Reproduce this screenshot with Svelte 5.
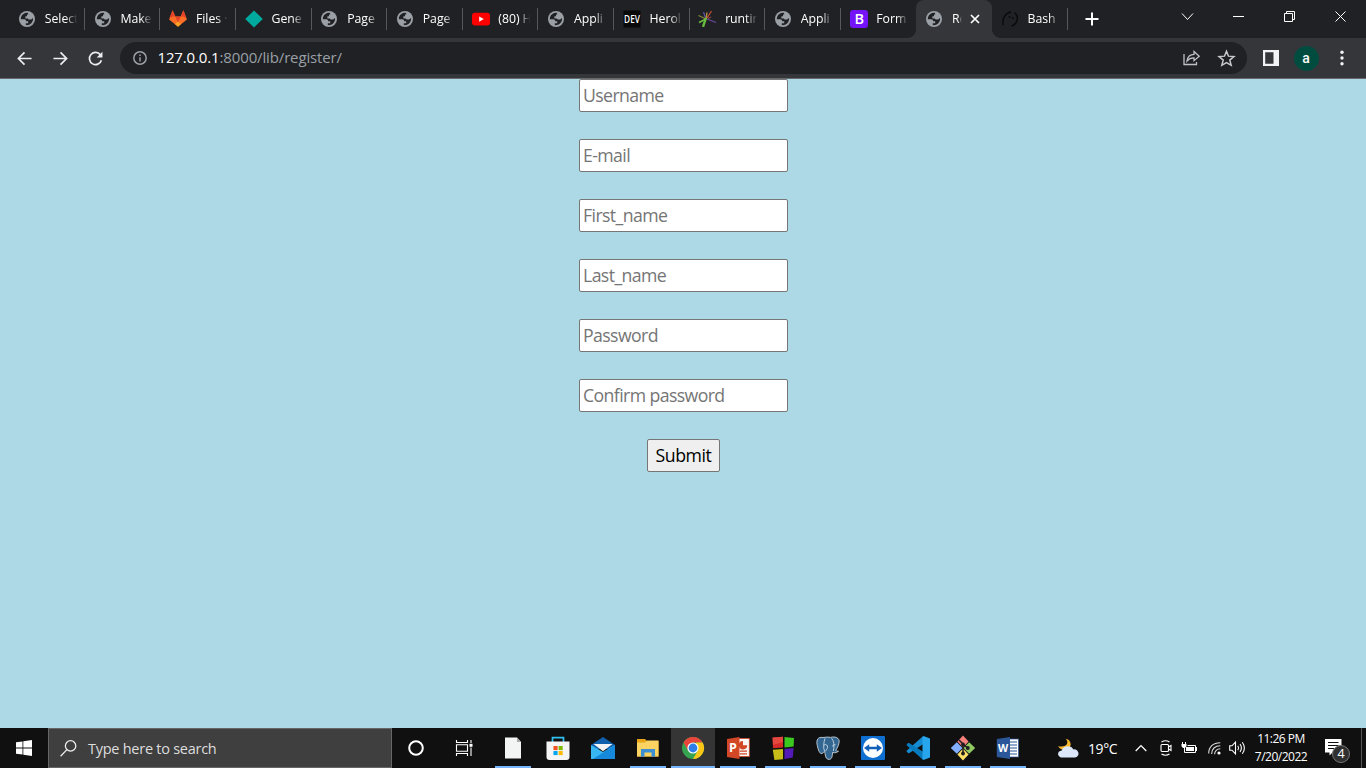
<script>
  const tabs = [
    { icon: 'globe', label: 'Select' },
    { icon: 'globe', label: 'Make' },
    { icon: 'gitlab', label: 'Files ·' },
    { icon: 'diamond', label: 'Gene' },
    { icon: 'globe', label: 'Page' },
    { icon: 'globe', label: 'Page' },
    { icon: 'youtube', label: '(80) H' },
    { icon: 'globe', label: 'Appli' },
    { icon: 'dev', label: 'Herol' },
    { icon: 'burst', label: 'runtin' },
    { icon: 'globe', label: 'Appli' },
    { icon: 'bootstrap', label: 'Form' },
    { icon: 'globe', label: 'Re', active: true },
    { icon: 'bash', label: 'Bash' }
  ];
  const fields = [
    { type: 'text', hint: 'Username' },
    { type: 'email', hint: 'E-mail' },
    { type: 'text', hint: 'First_name' },
    { type: 'text', hint: 'Last_name' },
    { type: 'password', hint: 'Password' },
    { type: 'password', hint: 'Confirm password' }
  ];
  const apps = [
    { id: 'file', open: true },
    { id: 'store' },
    { id: 'mail' },
    { id: 'explorer', open: true },
    { id: 'chrome', open: true, current: true },
    { id: 'ppt', open: true },
    { id: 'blocks', open: true },
    { id: 'pg', open: true },
    { id: 'tv', open: true },
    { id: 'code', open: true },
    { id: 'git', open: true },
    { id: 'word', open: true }
  ];
</script>

{#snippet favicon(name)}
  <svg class="fav" viewBox="0 0 16 16">
    {#if name === 'globe'}
      <circle cx="8" cy="8" r="8" fill="#9aa0a6" />
      <path d="M8.8 1.8C6 1.4 3 3 2 6.2L1.8 8.2H5.2C6.8 8.2 7.2 9.2 7.1 10.2H9.2V12.2H6.8V14C8 14.4 10.5 14 12 12.6C13.7 11 14.3 8.8 14 7L12.2 8.6H9.6L8.8 7.4H6.4V5.2H8V3.6H9.4Z" fill="#202124" />
    {:else if name === 'gitlab'}
      <path d="M2.6 -0.8L-0.9 8.5L8 15.8L16.9 8.5L13.4 -0.8L10.6 5.4H5.4Z" fill="#fc6d26" />
      <path d="M2.6 -0.8L-0.4 7L3 5.4H5.4ZM13.4 -0.8L16.4 7L13 5.4H10.6ZM5.4 5.4H10.6L8 12Z" fill="#e24329" />
      <path d="M5 13L8 10.4L11 13L8 15.8Z" fill="#fca326" />
    {:else if name === 'diamond'}
      <path d="M8 -0.6L16.8 8L8 16.6L-0.8 8Z" fill="#00a99d" />
    {:else if name === 'youtube'}
      <rect x="-1" y="1.7" width="18" height="12.8" rx="3" fill="#f00" />
      <path d="M6.2 5.4L10.8 8L6.2 10.8Z" fill="#fff" />
    {:else if name === 'dev'}
      <rect x="-.5" y="-.5" width="17" height="17" fill="#090909" />
      <text x="0.1" y="12.2" textLength="15.8" lengthAdjust="spacingAndGlyphs" font-size="11.5" font-weight="600" fill="#fff">DEV</text>
    {:else if name === 'burst'}
      <g fill="none" stroke-width="1.3">
        <path d="M7 8L-.5 4.5" stroke="#858a38" /><path d="M7 8L4.5 1" stroke="#5c4fa0" />
        <path d="M7 8L8 1.5" stroke="#b8983c" /><path d="M8 7L12.5 0" stroke="#c24d38" />
        <path d="M8 8L17 11.5" stroke="#6a4aa0" /><path d="M7 8L0 11.5" stroke="#69b83c" stroke-width="1.8" /><path d="M7 7L4 15.8" stroke="#69c040" stroke-width="2.3" />
        <path d="M9 7.5L12 6" stroke="#934a3c" />
      </g>
    {:else if name === 'bootstrap'}
      <rect x="-1" y="-1" width="18" height="18" rx="3.2" fill="#7413f8" />
      <text x="3.4" y="13.2" font-size="14.5" font-weight="600" fill="#fff">B</text>
    {:else}
      <g fill="none" stroke="#0a0b0c" stroke-width="1.5">
        <path d="M1.4 14C-.5 8 3 2.5 9 .8M12.5 1.5C17 5 16.4 12 9.5 15.2" />
      </g>
      <circle cx="7.5" cy="6" r="1" fill="#0a0b0c" /><circle cx="11" cy="7" r="1" fill="#0a0b0c" />
    {/if}
  </svg>
{/snippet}

{#snippet app(id)}
  <svg class="app" viewBox="0 0 24 24">
    {#if id === 'file'}
      <path d="M4 1.5H16L20 6V22.5H4Z" fill="#f3f4f4" /><path d="M16 1.5L20 6H16Z" fill="#aaa" />
    {:else if id === 'store'}
      <path d="M6.5 6V1.7H17.5V6" fill="none" stroke="#30c0ee" stroke-width="1.7" />
      <path d="M.5 5.5H23.5V21Q23.5 24 20.5 24H3.5Q.5 24 .5 21Z" fill="#f5f5f5" />
      <path d="M7.5 10H11.6V14.1H7.5Z" fill="#f25022" /><path d="M12.6 10H16.7V14.1H12.6Z" fill="#7fba00" />
      <path d="M7.5 15H11.6V19.1H7.5Z" fill="#00a4ef" /><path d="M12.6 15H16.7V19.1H12.6Z" fill="#ffb900" />
    {:else if id === 'mail'}
      <path d="M0 9L12 1L24 9V13H0Z" fill="#1160ae" />
      <path d="M0 9L12 16L24 9V23H0Z" fill="#38b7f2" /><path d="M24 9V23H2Z" fill="#1689da" />
      <path d="M2.5 8H21.5L12 15.2Z" fill="#f3f3f6" />
    {:else if id === 'explorer'}
      <path d="M1 3H9L11 5H22.5V20.5H1Z" fill="#e8a317" /><path d="M1 6.5H9L11 4.5H22.5V20.5H1Z" fill="#fbd363" />
      <path d="M5 20.8V13H19V20.8H15.5V16.5H8.5V20.8Z" fill="#3c8fd2" />
    {:else if id === 'chrome'}
      <circle cx="12" cy="12" r="11" fill="#35a34f" />
      <path d="M2.5 6.5A11 11 0 0 1 21.6 6.5H12L7.2 14.8Z" fill="#e8453b" />
      <path d="M21.6 6.5A11 11 0 0 1 12 23L16.8 14.8L15 6.5Z" fill="#fbc717" />
      <circle cx="12" cy="12" r="5.6" fill="#fff" /><circle cx="12" cy="12" r="4.4" fill="#2f7de9" />
    {:else if id === 'ppt'}
      <rect x="11" y="2.5" width="12.3" height="18" fill="#fbf7f5" stroke="#d24726" stroke-width=".8" />
      <path d="M17 5V9.3H21.3A4.2 4.2 0 1 1 17 5" fill="#d24726" /><path d="M14 15.2H21M14 17.8H21" stroke="#d24726" stroke-width="1.2" />
      <path d="M1 3L13.5 1V23L1 21Z" fill="#d24726" />
      <text x="3.1" y="16.3" font-size="12.5" font-weight="700" fill="#fff">P</text>
    {:else if id === 'blocks'}
      <path d="M1.5 1.5L12 .8V11.5L2 12.3Z" fill="#d52b28" /><path d="M13.5 1L23 2L22.6 10.5L13.5 11.5Z" fill="#3cc91f" />
      <path d="M1.8 13.8L12 13V23.2L3.4 24Z" fill="#c6bd19" /><path d="M13.5 13L22.6 12L21.8 21.5L13.5 23Z" fill="#5319b9" />
      <path d="M1.5 1.5L12 .8V6L2 9Z" fill="#f05b4c" opacity=".6" />
    {:else if id === 'pg'}
      <path d="M7 1.5C2 .5 .3 4 1 8C1.6 12 3.2 17 5 17.5C6.5 18 7.5 16 8.6 15.6C9.5 18 9 22.5 12 23.3C15.5 24 16.5 21 16.5 16.5C19 17.3 22 16.2 22.5 15C20.5 15.5 19.6 14.8 20 14C22.5 10 24.5 4.5 22 2.5C19.8 .5 16.5 .8 14.6 1.4C12 .8 9.7 1.2 7 1.5Z" fill="#336791" stroke="#dbe5ed" stroke-width=".8" />
      <path d="M8.5 15C7 12 7.7 6 9 2.4M15.6 2.2C18 5 18.6 10 17.4 15M8 9C10 8 12 9 11.5 11.5C11 13.5 10 14.5 9 15.5M19.5 8.8C17.5 8.3 16.6 9.1 17 10.8" fill="none" stroke="#dbe5ed" stroke-width=".8" />
    {:else if id === 'tv'}
      <rect width="24" height="24" rx="1" fill="#0e6fd1" /><circle cx="12" cy="12" r="10" fill="#fff" />
      <path d="M3 12L8.2 8.3V10.8H15.8V8.3L21 12L15.8 15.7V13.2H8.2V15.7Z" fill="#1160b7" />
    {:else if id === 'code'}
      <path d="M.3 15L17 .3L19 7L3 17.2L2 17Z" fill="#168bd1" /><path d="M.3 9L2 7.1L3 7L19 17L17 23.7Z" fill="#087bbf" />
      <path d="M17.5 0L24 2.5V21.5L17.5 24L16.5 23V1Z" fill="#27a6ed" />
    {:else if id === 'git'}
      <path d="M12 -.4L17.6 5.6L12 11.4L6.4 5.6Z" fill="#f47f7b" /><path d="M5.8 6.2L11.5 12L5.8 17.8L-.2 12Z" fill="#82afff" />
      <path d="M18.2 6.2L24.2 12L18.2 17.8L12.5 12Z" fill="#91ca62" /><path d="M12 12.6L17.6 18.4L12 24.4L6.4 18.4Z" fill="#ffe066" />
      <path d="M8 4L12 8V19M12 8L17 12.5" fill="none" stroke="#201c20" stroke-width="1.5" />
      <circle cx="12" cy="8.5" r="1.9" fill="#201c20" /><circle cx="16.8" cy="12" r="1.9" fill="#201c20" /><circle cx="12" cy="17.5" r="1.9" fill="#201c20" />
    {:else}
      <rect x="12" y="3" width="10.5" height="18" fill="#fff" stroke="#2b579a" stroke-width=".7" />
      <path d="M14 6H21M14 9H21M14 12H21M14 15H21M14 18H21" stroke="#2b579a" stroke-width="1.2" />
      <path d="M.8 3L14 1V23L.8 21Z" fill="#2b579a" />
      <text x="2" y="16" font-size="10.5" font-weight="700" fill="#fff">W</text>
    {/if}
  </svg>
{/snippet}

<div class="screen">
  <header class="strip">
    {#each tabs as tab, i}
      <div class="tab" class:active={tab.active} class:nosep={i === 11 || tab.active}>
        {@render favicon(tab.icon)}
        <span class="title">{tab.label}</span>
        {#if tab.active}
          <svg class="close" viewBox="0 0 10 10"><path d="M1 1L9 9M9 1L1 9" stroke="#fff" stroke-width="1.7" /></svg>
        {/if}
      </div>
    {/each}
    <svg class="plus" viewBox="0 0 14 14"><path d="M7 .5V13.5M.5 7H13.5" stroke="#fff" stroke-width="2" /></svg>
    <div class="controls">
      <svg width="46" height="34" viewBox="0 0 46 34" fill="none" stroke="#fff"><path d="M13 13.5L18.5 19.5L24 13.5" /></svg>
      <svg width="51" height="34" viewBox="0 0 51 34" fill="none" stroke="#fff"><path d="M18 16.5H29" /></svg>
      <svg width="51" height="34" viewBox="0 0 51 34" fill="none" stroke="#fff"><path d="M18.5 13.5H26.5V21.5H18.5ZM20.5 13.5V11.5H28.5V19.5H26.5" /></svg>
      <svg width="49" height="34" viewBox="0 0 49 34" fill="none" stroke="#fff"><path d="M18.5 11.5L28.5 21.5M28.5 11.5L18.5 21.5" /></svg>
    </div>
  </header>

  <nav class="toolbar">
    <svg class="nav" viewBox="0 0 16 16"><path d="M15.5 8H2M8 1.5L1.5 8L8 14.5" /></svg>
    <svg class="nav" viewBox="0 0 16 16"><path d="M.5 8H14M8 1.5L14.5 8L8 14.5" /></svg>
    <svg class="nav" viewBox="0 0 16 16"><path d="M13.3 4.2A6.5 6.5 0 1 0 14.3 9.8" /><path d="M15.4 .8V6.9H9.3Z" fill="#eceef0" stroke="none" /></svg>
    <div class="omnibox">
      <svg class="info" viewBox="0 0 14 14"><circle cx="7" cy="7" r="6.2" fill="none" stroke="#9aa0a6" stroke-width="1.5" /><path d="M7 6.2V10.5M7 3.4V5" stroke="#9aa0a6" stroke-width="1.5" /></svg>
      <span class="url"><b>127.0.0.1</b>:8000/lib/register/</span>
      <svg class="share" viewBox="0 0 18 16"><path d="M1 4V14.5H13.5V12M4 11C4.6 7 7 4.5 11 4.4V1.5L16.2 6.2L11 10.7V7.8C8 7.7 5.8 8.8 4 11Z" fill="none" stroke="#bdc1c6" stroke-width="1.3" /></svg>
      <svg class="star" viewBox="0 0 16 16"><path d="M8 1.2L9.9 5.8L15 6.2L11.1 9.5L12.4 14.4L8 11.8L3.6 14.4L4.9 9.5L1 6.2L6.1 5.8Z" fill="none" stroke="#c8cacc" stroke-width="1.4" /></svg>
    </div>
    <svg class="panel" viewBox="0 0 16 16"><path d="M0 0H16V16H0ZM2.2 2.2V13.8H10.5V2.2Z" fill="#f1f3f4" fill-rule="evenodd" /></svg>
    <span class="avatar">a</span>
    <svg class="more" viewBox="0 0 4 16" fill="#f1f3f4"><circle cx="2" cy="2.3" r="1.7" /><circle cx="2" cy="8" r="1.7" /><circle cx="2" cy="13.7" r="1.7" /></svg>
  </nav>

  <main>
    <form>
      {#each fields as field}
        <input type={field.type} placeholder={field.hint} />
      {/each}
      <button type="button">Submit</button>
    </form>
  </main>

  <footer class="taskbar">
    <div class="start">
      <svg width="16" height="16" viewBox="0 0 16 16" fill="#fff"><path d="M0 2.3L6.5 1.4V7.5H0ZM7.3 1.3L16 0V7.5H7.3ZM0 8.4H6.5V14.6L0 13.7ZM7.3 8.4H16V16L7.3 14.7Z" /></svg>
    </div>
    <div class="search">
      <svg width="17" height="17" viewBox="0 0 17 17" fill="none" stroke="#eee" stroke-width="1.3"><circle cx="10.6" cy="5.9" r="5.2" /><path d="M6.9 9.6L.6 16.2" /></svg>
      <span>Type here to search</span>
    </div>
    <div class="sys"><svg width="16" height="16" viewBox="0 0 16 16"><circle cx="8" cy="8" r="6.8" fill="none" stroke="#fff" stroke-width="2" /></svg></div>
    <div class="sys"><svg width="17" height="16" viewBox="0 0 17 16" fill="none" stroke="#fff" stroke-width="1.1"><path d="M.5 0V2.5H11.5V0M.5 16V13.5H11.5V16M.5 4.8H11.5V11.2H.5ZM15 0V3M15 7.5V16" /><path d="M13.5 3.8H16.5V6.8H13.5Z" fill="#fff" stroke="none" /></svg></div>
    {#each apps as a}
      <div class="task" class:open={a.open} class:current={a.current}>{@render app(a.id)}</div>
    {/each}
    <div class="tray">
      <svg class="weather" viewBox="0 0 24 22">
        <path d="M9 .8C13 4.5 10.5 10.5 1 8.6C4 13.5 11 13.5 13.5 9.5C15.5 6 13.5 1.5 9 .8Z" fill="#f9b92e" />
        <path d="M6 20.5C0 20.5 -.7 13.6 5 13C6.5 7 15.8 7.4 17 12C22 11 25.5 19 19 20.5Z" fill="#dce7fa" />
      </svg>
      <span class="temp">19°C</span>
      <svg class="chev" viewBox="0 0 12 8"><path d="M.7 7L6 1.6L11.3 7" fill="none" stroke="#fff" stroke-width="1.3" /></svg>
      <svg class="meet" viewBox="0 0 12 16" fill="none" stroke="#fff" stroke-width="1.1"><rect x="1" y="4.5" width="7.5" height="7" rx="1" /><path d="M8.5 7L11 5.5V10.5L8.5 9M1.5 2Q5.5-.5 9.5 2M1.5 14Q5.5 16.5 9.5 14" /></svg>
      <svg class="batt" viewBox="0 0 17 13" fill="none" stroke="#fff"><path d="M3.5 6V10.5H14.5V3.5H6.5M15.5 5V9M1.5 0V2M4.5 0V2" /><path d="M.5 2H5.5V4.2L4 6H2L.5 4.2ZM5 5H13V9H5Z" fill="#fff" stroke="none" /></svg>
      <svg class="wifi" viewBox="0 0 13 13" fill="none" stroke="#ddd" stroke-width="1.1"><path d="M.7 11.5C.7 5 5 .8 12.3 .8M3.6 12C3.6 7 7 3.8 12.3 3.8M6.6 12.2C6.6 9 9 6.8 12.3 6.8" /><circle cx="11" cy="11" r="1.6" fill="#fff" stroke="none" /></svg>
      <svg class="vol" viewBox="0 0 17 14" fill="none" stroke="#fff" stroke-width="1.1"><path d="M.7 4.8H3L6.5 1.2V12.8L3 9.2H.7ZM8.8 4.7Q10.4 7 8.8 9.3M11 3Q13.8 7 11 11M13.3 1.2Q17.5 7 13.3 12.8" /></svg>
      <div class="clock"><span>11:26 PM</span><span>7/20/2022</span></div>
      <div class="notes">
        <svg width="17" height="17" viewBox="0 0 17 17"><path d="M0 0H16.5V13.5H7.5L4.5 16.5V13.5H0Z" fill="#fff" /><path d="M3 3.5H13.5M3 6.5H13.5M3 9.5H9" stroke="#111" /></svg>
        <span class="badge">4</span>
      </div>
      <div class="desk"></div>
    </div>
  </footer>
</div>

<style>
  :global(body) { overflow: hidden; }
  .screen {
    width: 1366px; height: 768px; display: flex; flex-direction: column; overflow: hidden;
    font-family: "Open Sans", "Noto Sans", sans-serif; background: #add8e6;
  }
  svg { display: block; flex: none; overflow: visible; }
  .strip { height: 38px; flex: none; display: flex; background: #202124; padding-left: 9px; box-sizing: border-box; }
  .tab { position: relative; width: 75.6px; flex: none; box-sizing: border-box; padding-left: 10px; display: flex; align-items: center; }
  .tab::after { content: ""; position: absolute; right: -0.3px; top: 8px; width: 1px; height: 22px; background: #55575b; }
  .tab:last-of-type::after { right: -1px; }
  .tab.nosep::after { display: none; }
  .fav { width: 16px; height: 16px; }
  .title {
    margin: 0 0 0 9.8px; width: 33px; overflow: hidden; white-space: nowrap; font-size: 12.3px; line-height: 18px; color: #fff;
    letter-spacing: -0.05px;
    mask-image: linear-gradient(90deg, #000 62%, transparent 98%);
  }
  .active { background: #35363a; border-radius: 8px 8px 0 0; }
  .active::before {
    content: ""; position: absolute; left: -8px; right: -8px; bottom: 0; height: 8px;
    background:
      radial-gradient(circle at 0 0, transparent 7.5px, #35363a 8px) left / 8px 8px no-repeat,
      radial-gradient(circle at 100% 0, transparent 7.5px, #35363a 8px) right / 8px 8px no-repeat;
  }
  .active .title { width: 10px; }
  .close { width: 10px; height: 10px; margin-left: 8px; }
  .plus { width: 14px; height: 14px; margin: 12px 0 0 17.6px; }
  .controls { display: flex; margin-left: auto; }

  .toolbar { height: 41px; flex: none; box-sizing: border-box; display: flex; align-items: center; background: #35363a; padding: 0 22px 0 17px; border-bottom: 1px solid #66696c; }
  .nav { width: 15px; height: 15px; margin-right: 20.5px; fill: none; stroke: #eceef0; stroke-width: 1.8; }
  .omnibox { width: 1127px; height: 32px; border-radius: 16px; background: #202124; display: flex; align-items: center; box-sizing: border-box; padding: 0 12px 0 13px; margin-left: -4px; flex: none; }
  .info { width: 14px; height: 14px; }
  .url { margin: -2px auto 0 11px; font-size: 15px; line-height: 22px; color: #9aa0a6; letter-spacing: -0.14px; }
  .url b { font-weight: 400; color: #fff; }
  .share { width: 18px; height: 16px; margin-right: 17px; }
  .star { width: 17px; height: 17px; }
  .panel { width: 16px; height: 16px; margin-left: 16px; }
  .avatar { width: 25px; height: 25px; margin-left: 15px; border-radius: 50%; background: #004d40; color: #fff; text-align: center; font: 500 14px/24px Roboto, sans-serif; }
  .more { width: 4px; height: 16px; margin-left: auto; }

  main { flex: 1; display: flex; justify-content: center; align-items: flex-start; background: #add8e6; }
  form { display: flex; flex-direction: column; align-items: center; gap: 27px; padding-left: 1px; }
  input, button { box-sizing: border-box; height: 33px; border: 1px solid #767676; border-radius: 2px; font-family: inherit; font-size: 17.7px; line-height: 27px; margin: 0; }
  input { width: 209px; padding: 0 3px 1px; background: #fff; letter-spacing: -0.6px; }
  input::placeholder { color: #757575; opacity: 1; }
  button { width: 73px; padding: 0 0 1px; background: #efefef; color: #000; letter-spacing: -0.45px; }

  .taskbar { height: 40px; flex: none; display: flex; background: #101010; color: #fff; }
  .start, .sys { width: 48px; flex: none; display: flex; align-items: center; justify-content: center; }
  .search { width: 344px; flex: none; box-sizing: border-box; border: 1px solid #666; background: #3f3f3f; display: flex; align-items: center; gap: 11px; padding-left: 11px; font-size: 14.5px; letter-spacing: -0.26px; color: #ddd; }
  .sys + .task { margin-left: 2px; }
  .task { width: 45px; flex: none; display: flex; align-items: center; justify-content: center; position: relative; }
  .task.open::after { content: ""; position: absolute; left: 5px; width: 36px; bottom: 0; height: 2px; background: #75b5fb; }
  .task.current { background: linear-gradient(90deg, transparent 1px, #353535 1px); }
  .task.current::after { left: 1px; width: 44px; }
  .app { width: 24px; height: 24px; }
  .tray { margin-left: auto; display: flex; align-items: center; }
  .weather { width: 23px; height: 21px; }
  .temp { width: 30px; margin: 0 17px 0 8px; font-size: 14px; letter-spacing: -0.4px; white-space: nowrap; }
  .chev { width: 12px; height: 8px; margin-right: 13px; }
  .meet { width: 12px; height: 16px; margin-right: 9px; }
  .batt { width: 17px; height: 13px; margin-right: 10px; }
  .wifi { width: 13px; height: 13px; margin-right: 8px; }
  .vol { width: 17px; height: 14px; margin-right: 8px; }
  .clock { width: 54px; display: flex; flex-direction: column; align-items: center; font-size: 12px; line-height: 18px; letter-spacing: -0.5px; white-space: nowrap; margin-top: -1px; }
  .notes { position: relative; width: 17px; height: 17px; margin: -1px 19px 0 17px; }
  .badge { position: absolute; left: 7px; top: 6px; width: 16px; height: 16px; border: 1px solid #777; border-radius: 50%; background: #303030; font-size: 12.5px; line-height: 16px; text-align: center; }
  .desk { width: 4px; height: 40px; border-left: 1px solid #555; }
</style>
